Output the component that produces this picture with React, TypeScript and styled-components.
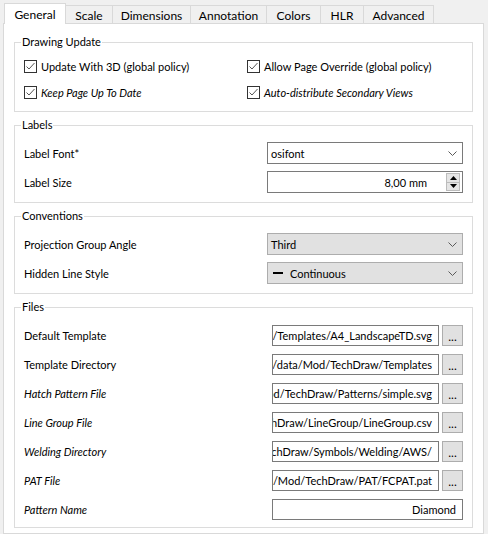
import React from 'react';
import styled, { createGlobalStyle } from 'styled-components';

const Global = createGlobalStyle`
  html, body { margin: 0; padding: 0; background: #f0f0f0; }
  body { font-family: Lato, "Liberation Sans", sans-serif; font-size: 11px; color: #000; }
  #root { width: 488px; height: 534px; overflow: hidden; }
`;

const Window = styled.div`
  box-sizing: border-box;
  width: 488px;
  height: 534px;
  padding: 3px 4px 0 3px;
  display: flex;
  flex-direction: column;
`;

const TabBar = styled.div`
  display: flex;
  align-items: flex-end;
  height: 20px;
  padding-left: 1px;
`;

const Tab = styled.div<{ $w: number; $active?: boolean; $first?: boolean }>`
  box-sizing: border-box;
  width: ${p => p.$w}px;
  height: ${p => (p.$active ? 21 : 18)}px;
  margin-left: ${p => (p.$first ? 0 : -1)}px;
  margin-bottom: ${p => (p.$active ? -1 : 0)}px;
  border: 1px solid #d9d9d9;
  border-bottom: none;
  background: ${p => (p.$active ? '#ffffff' : '#f0f0f0')};
  display: flex;
  align-items: center;
  justify-content: center;
  position: relative;
  z-index: ${p => (p.$active ? 2 : 1)};
  padding-top: ${p => (p.$active ? 0 : 1)}px;
  font-size: 12px;
`;

const Pane = styled.div`
  box-sizing: border-box;
  flex: 1;
  position: relative;
  z-index: 0;
  background: #ffffff;
  border: 1px solid #d9d9d9;
  padding: 11px 10px 0 10px;
  display: flex;
  flex-direction: column;
  gap: 6px;
`;

const Group = styled.fieldset<{ $pt: number; $pb: number }>`
  margin: 0;
  min-width: 0;
  border: 1px solid #dcdcdc;
  padding: ${p => p.$pt}px 9px ${p => p.$pb}px 9px;
`;

const Legend = styled.legend`
  padding: 0 1px;
  margin-left: -3px;
  line-height: 14px;
  font-size: 11px;
`;

const CheckGrid = styled.div`
  display: grid;
  grid-template-columns: 223px minmax(0, 1fr);
  grid-auto-rows: 20px;
  row-gap: 6px;
`;

const CheckItem = styled.label<{ $italic?: boolean }>`
  display: flex;
  align-items: center;
  gap: 4px;
  font-style: ${p => (p.$italic ? 'italic' : 'normal')};
  white-space: nowrap;
`;

const Box = styled.span`
  box-sizing: border-box;
  width: 13px;
  height: 13px;
  border: 1px solid #333333;
  background: #ffffff;
  display: flex;
  align-items: center;
  justify-content: center;
  flex: none;
`;

const FormGrid = styled.div<{ $label: number; $gap: number; $row: number }>`
  display: grid;
  grid-template-columns: ${p => p.$label}px minmax(0, 1fr);
  grid-auto-rows: ${p => p.$row}px;
  row-gap: ${p => p.$gap}px;
  align-items: center;
`;

const Label = styled.span<{ $italic?: boolean }>`
  font-style: ${p => (p.$italic ? 'italic' : 'normal')};
  white-space: nowrap;
`;

const Combo = styled.div<{ $flat?: boolean }>`
  box-sizing: border-box;
  height: 22px;
  border: 1px solid ${p => (p.$flat ? '#adadad' : '#7a7a7a')};
  background: ${p => (p.$flat ? '#e1e1e1' : '#ffffff')};
  display: flex;
  align-items: center;
  padding: 0 5px 0 3px;
  gap: 5px;
`;

const ComboText = styled.span`
  flex: 1;
  white-space: nowrap;
`;

const LineSwatch = styled.span`
  width: 10px;
  height: 2px;
  background: #000;
  margin-left: 2px;
  margin-right: 2px;
  flex: none;
`;

const Spin = styled.div`
  box-sizing: border-box;
  height: 22px;
  border: 1px solid #7a7a7a;
  background: #ffffff;
  display: flex;
  align-items: center;
  padding: 1px 2px 1px 0;
`;

const SpinValue = styled.span`
  flex: 1;
  text-align: right;
  padding-right: 19px;
`;

const SpinButtons = styled.div`
  display: flex;
  flex-direction: column;
  width: 14px;
  height: 18px;
`;

const SpinBtn = styled.div`
  box-sizing: border-box;
  flex: 1;
  background: #e5e5e5;
  border: 1px solid #bcbcbc;
  display: flex;
  align-items: center;
  justify-content: center;
  & + & { border-top: none; }
`;

const FileControl = styled.div`
  display: flex;
  gap: 3px;
  height: 21px;
  min-width: 0;
`;

const PathInput = styled.div`
  box-sizing: border-box;
  flex: 1;
  min-width: 0;
  height: 21px;
  border: 1px solid #7a7a7a;
  background: #ffffff;
  overflow: hidden;
  display: flex;
  justify-content: flex-end;
  align-items: center;
  padding: 0 6px 0 2px;
  white-space: nowrap;
`;

const PathText = styled.span`
  flex: none;
`;

const DotsButton = styled.div`
  box-sizing: border-box;
  width: 21px;
  height: 21px;
  background: #e1e1e1;
  border: 1px solid #adadad;
  display: flex;
  align-items: center;
  justify-content: center;
  font-size: 12px;
  padding-top: 1px;
  flex: none;
`;

const Chevron = () => (
  <svg width="9" height="5" viewBox="0 0 9 5">
    <polyline points="0.5,0.5 4.5,4.5 8.5,0.5" fill="none" stroke="#5a5a5a" strokeWidth="1" />
  </svg>
);

const Check = () => (
  <svg width="11" height="11" viewBox="0 0 11 11">
    <polyline points="1.5,5.5 4,8 9.5,2" fill="none" stroke="#555" strokeWidth="1" />
  </svg>
);

const Tri = ({ up }: { up?: boolean }) => (
  <svg width="7" height="4" viewBox="0 0 7 4">
    <polygon points={up ? '0,4 7,4 3.5,0' : '0,0 7,0 3.5,4'} fill="#000" />
  </svg>
);

const tabs = [
  { label: 'General', w: 62 },
  { label: 'Scale', w: 48 },
  { label: 'Dimensions', w: 79 },
  { label: 'Annotation', w: 77 },
  { label: 'Colors', w: 55 },
  { label: 'HLR', w: 44 },
  { label: 'Advanced', w: 71 },
];

const files = [
  { label: 'Default Template', path: 'Draw/Templates/A4_LandscapeTD.svg' },
  { label: 'Template Directory', path: 'FreeCAD/data/Mod/TechDraw/Templates' },
  { label: 'Hatch Pattern File', path: 'Mod/TechDraw/Patterns/simple.svg', italic: true },
  { label: 'Line Group File', path: 'Mod/TechDraw/LineGroup/LineGroup.csv', italic: true },
  { label: 'Welding Directory', path: 'Mod/TechDraw/Symbols/Welding/AWS/', italic: true },
  { label: 'PAT File', path: 'data/Mod/TechDraw/PAT/FCPAT.pat', italic: true },
];

const checks = [
  { label: 'Update With 3D (global policy)' },
  { label: 'Allow Page Override (global policy)' },
  { label: 'Keep Page Up To Date', italic: true },
  { label: 'Auto-distribute Secondary Views', italic: true },
];

export default function App() {
  return (
    <>
      <Global />
      <Window>
        <TabBar>
          {tabs.map((t, i) => (
            <Tab key={t.label} $w={t.w} $active={i === 0} $first={i === 0}>
              {t.label}
            </Tab>
          ))}
        </TabBar>
        <Pane>
          <Group $pt={7} $pb={9}>
            <Legend>Drawing Update</Legend>
            <CheckGrid>
              {checks.map(c => (
                <CheckItem key={c.label} $italic={c.italic}>
                  <Box><Check /></Box>
                  {c.label}
                </CheckItem>
              ))}
            </CheckGrid>
          </Group>

          <Group $pt={10} $pb={9}>
            <Legend>Labels</Legend>
            <FormGrid $label={243} $gap={7} $row={22}>
              <Label>Label Font*</Label>
              <Combo>
                <ComboText>osifont</ComboText>
                <Chevron />
              </Combo>
              <Label>Label Size</Label>
              <Spin>
                <SpinValue>8,00 mm</SpinValue>
                <SpinButtons>
                  <SpinBtn><Tri up /></SpinBtn>
                  <SpinBtn><Tri /></SpinBtn>
                </SpinButtons>
              </Spin>
            </FormGrid>
          </Group>

          <Group $pt={10} $pb={9}>
            <Legend>Conventions</Legend>
            <FormGrid $label={243} $gap={7} $row={22}>
              <Label>Projection Group Angle</Label>
              <Combo $flat>
                <ComboText>Third</ComboText>
                <Chevron />
              </Combo>
              <Label>Hidden Line Style</Label>
              <Combo $flat>
                <LineSwatch />
                <ComboText>Continuous</ComboText>
                <Chevron />
              </Combo>
            </FormGrid>
          </Group>

          <Group $pt={11} $pb={7}>
            <Legend>Files</Legend>
            <FormGrid $label={248} $gap={8} $row={21}>
              {files.map(f => (
                <React.Fragment key={f.label}>
                  <Label $italic={f.italic}>{f.label}</Label>
                  <FileControl>
                    <PathInput><PathText>{f.path}</PathText></PathInput>
                    <DotsButton>...</DotsButton>
                  </FileControl>
                </React.Fragment>
              ))}
              <Label $italic>Pattern Name</Label>
              <PathInput><PathText>Diamond</PathText></PathInput>
            </FormGrid>
          </Group>
        </Pane>
      </Window>
    </>
  );
}
